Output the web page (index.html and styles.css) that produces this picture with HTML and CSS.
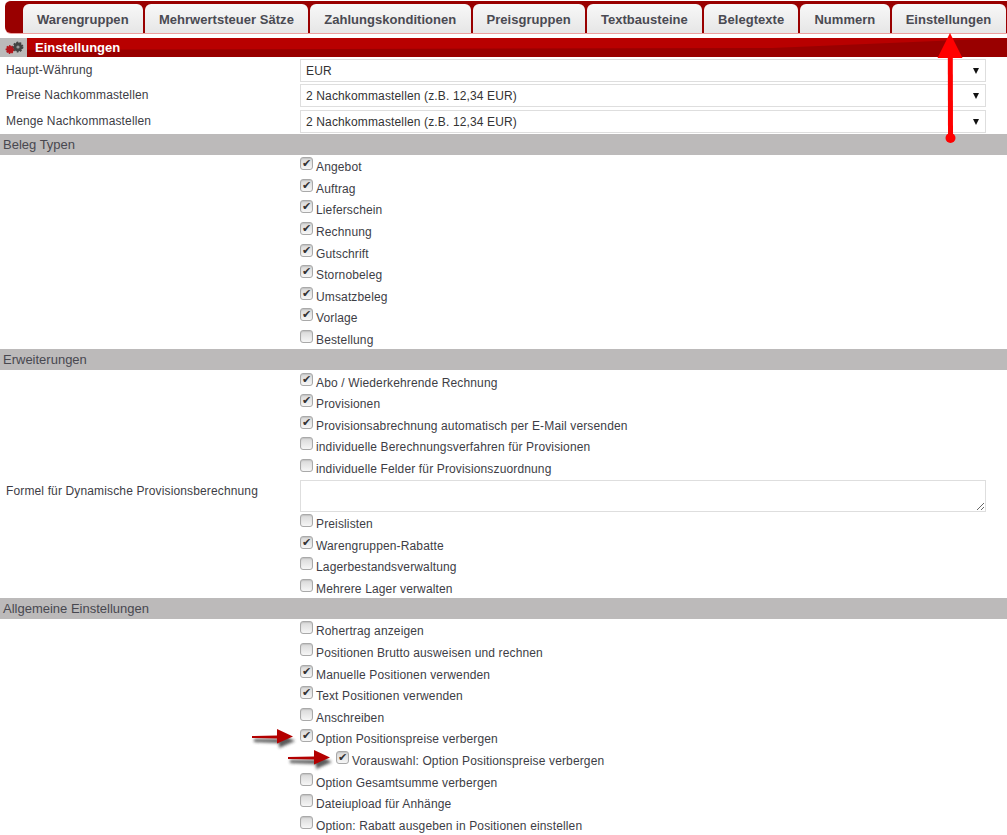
FILE: index.html
```html
<!DOCTYPE html>
<html lang="de">
<head>
<meta charset="utf-8">
<title>Einstellungen</title>
<link rel="stylesheet" href="styles.css">
</head>
<body>

<div class="TabBar">
  <a class="Tab">Warengruppen</a>
  <a class="Tab">Mehrwertsteuer Sätze</a>
  <a class="Tab">Zahlungskonditionen</a>
  <a class="Tab">Preisgruppen</a>
  <a class="Tab">Textbausteine</a>
  <a class="Tab">Belegtexte</a>
  <a class="Tab">Nummern</a>
  <a class="Tab">Einstellungen</a>
</div>

<div class="TitleBar">
  <div class="TitleIcon">
    <svg width="27" height="19" viewBox="0 0 27 19">
      <g fill="#b5161c" stroke="#b5161c" stroke-width="1.6" stroke-dasharray="1.5 1.1"><circle cx="10" cy="11.5" r="3.6"/></g>
      <g fill="#444" stroke="#444" stroke-width="2" stroke-dasharray="1.8 1.3"><circle cx="18" cy="9" r="4.4"/></g>
      <circle cx="18" cy="9" r="1.6" fill="#999"/>
    </svg>
  </div>
  <div class="TitleText"><span>Einstellungen</span></div>
</div>

<div class="FieldRow first">
  <label>Haupt-Währung</label>
  <div class="SelectBox">EUR</div>
</div>
<div class="FieldRow second">
  <label>Preise Nachkommastellen</label>
  <div class="SelectBox">2 Nachkommastellen (z.B. 12,34 EUR)</div>
</div>
<div class="FieldRow third">
  <label>Menge Nachkommastellen</label>
  <div class="SelectBox">2 Nachkommastellen (z.B. 12,34 EUR)</div>
</div>

<h2 class="Section">Beleg Typen</h2>
<div class="Check"><input type="checkbox" checked><span>Angebot</span></div>
<div class="Check"><input type="checkbox" checked><span>Auftrag</span></div>
<div class="Check"><input type="checkbox" checked><span>Lieferschein</span></div>
<div class="Check"><input type="checkbox" checked><span>Rechnung</span></div>
<div class="Check"><input type="checkbox" checked><span>Gutschrift</span></div>
<div class="Check"><input type="checkbox" checked><span>Stornobeleg</span></div>
<div class="Check"><input type="checkbox" checked><span>Umsatzbeleg</span></div>
<div class="Check"><input type="checkbox" checked><span>Vorlage</span></div>
<div class="Check"><input type="checkbox"><span>Bestellung</span></div>

<h2 class="Section">Erweiterungen</h2>
<div class="Check"><input type="checkbox" checked><span>Abo / Wiederkehrende Rechnung</span></div>
<div class="Check"><input type="checkbox" checked><span>Provisionen</span></div>
<div class="Check"><input type="checkbox" checked><span>Provisionsabrechnung automatisch per E-Mail versenden</span></div>
<div class="Check"><input type="checkbox"><span>individuelle Berechnungsverfahren für Provisionen</span></div>
<div class="Check"><input type="checkbox"><span>individuelle Felder für Provisionszuordnung</span></div>
<div class="FieldRow formula">
  <label>Formel für Dynamische Provisionsberechnung</label>
  <textarea></textarea>
</div>
<div class="Check"><input type="checkbox"><span>Preislisten</span></div>
<div class="Check"><input type="checkbox" checked><span>Warengruppen-Rabatte</span></div>
<div class="Check"><input type="checkbox"><span>Lagerbestandsverwaltung</span></div>
<div class="Check"><input type="checkbox"><span>Mehrere Lager verwalten</span></div>

<h2 class="Section">Allgemeine Einstellungen</h2>
<div class="Check"><input type="checkbox"><span>Rohertrag anzeigen</span></div>
<div class="Check"><input type="checkbox"><span>Positionen Brutto ausweisen und rechnen</span></div>
<div class="Check"><input type="checkbox" checked><span>Manuelle Positionen verwenden</span></div>
<div class="Check"><input type="checkbox" checked><span>Text Positionen verwenden</span></div>
<div class="Check"><input type="checkbox"><span>Anschreiben</span></div>
<div class="Check"><input type="checkbox" checked><span>Option Positionspreise verbergen</span></div>
<div class="Check sub"><input type="checkbox" checked><span>Vorauswahl: Option Positionspreise verbergen</span></div>
<div class="Check"><input type="checkbox"><span>Option Gesamtsumme verbergen</span></div>
<div class="Check"><input type="checkbox"><span>Dateiupload für Anhänge</span></div>
<div class="Check"><input type="checkbox"><span>Option: Rabatt ausgeben in Positionen einstellen</span></div>

<svg class="Marks" width="1007" height="835" viewBox="0 0 1007 835">
  <defs>
    <filter id="blur" x="-20%" y="-100%" width="140%" height="300%"><feGaussianBlur stdDeviation="1.6"/></filter>
  </defs>
  <!-- big arrow to the tab -->
  <path d="M947.8 56 L948 138 L953 138 L952.8 56 Z" fill="#f00"/>
  <path d="M950 33 L962.5 58 L937.5 58 Z" fill="#f00"/>
  <circle cx="950.5" cy="138" r="5" fill="#f00"/>
  <!-- small arrows with shadow -->
  <g fill="#333" filter="url(#blur)" opacity=".8">
    <path d="M254 739 L279 739 L279 733 L295 741 L279 748 L279 743 L254 742 Z"/>
    <path d="M290 760 L316 760 L316 754 L332 762 L316 769 L316 764 L290 763 Z"/>
  </g>
  <g fill="#b30000">
    <path d="M252 736 L277 735.5 L277 729 L293 736.5 L277 743.5 L277 738.5 L252 738 Z"/>
    <path d="M288 757 L314 756.5 L314 750 L330 757.5 L314 764.5 L314 759.5 L288 759 Z"/>
  </g>
</svg>

</body>
</html>
```

FILE: styles.css
```css
html, body {
  margin: 0;
  height: 835px;
  overflow: hidden;
  background: white;
}

body {
  position: relative;
  font-family: "Liberation Sans", Arial, sans-serif;
  font-size: 12px;
  letter-spacing: .14px;
  color: #3d3d45;
}

/* tabs */
.TabBar {
  display: flex;
  height: 33px;
  box-sizing: border-box;
  margin-left: 5px;
  padding: 3px 0 0 18px;
  background: #990000;
  border-radius: 6px 0 0 6px;
  border-top: 1px solid white;
  box-shadow: 0 1px 0 #eda0a0;
}

.Tab {
  box-sizing: border-box;
  flex: none;
  height: 29px;
  line-height: 31px;
  margin-right: 2px;
  padding: 0 14.3px 0 14px;
  border-radius: 6px 6px 0 0;
  background: linear-gradient(#f8f8f8, #e6e6e6);
  font-size: 13px;
  font-weight: bold;
  letter-spacing: .03px;
  color: #4a4a52;
}

/* title */
.TitleBar {
  display: flex;
  height: 19px;
  margin-top: 5px;
}

.TitleIcon {
  flex: none;
  width: 27px;
  height: 19px;
  background: #bbbaba;
}

.TitleIcon svg {
  display: block;
}

.TitleText {
  position: relative;
  flex: 1;
  padding-left: 8px;
  background: #b80000;
  color: white;
  font-size: 13px;
  font-weight: bold;
  line-height: 19px;
  letter-spacing: 0;
}

.TitleText span {
  position: relative;
  z-index: 1;
}

.TitleText::before {
  content: "";
  position: absolute;
  inset: 0;
  background: #990000;
  clip-path: polygon(0 100%, 0 62%, 76% 52%, 100% 0, 100% 100%);
}

/* rows */
.FieldRow {
  display: grid;
  grid-template-columns: 300px 686px;
  align-items: center;
}

.FieldRow label {
  padding: 0 0 1px 6px;
}

.first {
  height: 26px;
}

.second {
  height: 25px;
}

.third {
  height: 26px;
}

.SelectBox {
  position: relative;
  align-self: end;
  box-sizing: border-box;
  height: 23px;
  margin-bottom: 1px;
  line-height: 22px;
  padding-left: 5px;
  border: 1px solid #dedede;
  color: #333;
  background: white;
}

.SelectBox::after {
  content: "";
  position: absolute;
  right: 6px;
  top: 8px;
  border-left: 3.5px solid transparent;
  border-right: 3.5px solid transparent;
  border-top: 6px solid #111;
}

.Section {
  margin: 0;
  height: 21px;
  line-height: 21px;
  padding-left: 3px;
  background: #bcbaba;
  font-size: 13px;
  font-weight: normal;
  letter-spacing: 0;
  color: #484850;
}

.Check {
  display: flex;
  align-items: center;
  box-sizing: border-box;
  height: 21.6px;
  padding: 3px 0 0 300px;
}

.Check.sub {
  padding-left: 336px;
}

.Check span {
  margin-left: 3px;
}

.Check input {
  appearance: none;
  position: relative;
  flex: none;
  box-sizing: border-box;
  width: 13px;
  height: 13px;
  margin: -7px 0 0 0;
  border: 1px solid #a9a9a9;
  border-radius: 3px;
  background: linear-gradient(#d8d8d8, #f6f6f6);
  box-shadow: inset 0 1px 1px #c4c4c4;
}

.Check input:checked::after {
  content: "\2714";
  position: absolute;
  left: 1px;
  top: -1px;
  font: 11px/13px "DejaVu Sans", sans-serif;
  letter-spacing: 0;
  color: #333;
}

.formula {
  height: 33.5px;
}

.formula label {
  padding-bottom: 9px;
}

.formula textarea {
  display: block;
  box-sizing: border-box;
  width: 686px;
  height: 32px;
  margin: 1px 0 0 0;
  padding: 0;
  border: 1px solid #dedede;
  background: white;
}

/* annotations drawn over the page */
.Marks {
  position: absolute;
  left: 0;
  top: 0;
  pointer-events: none;
}
```
